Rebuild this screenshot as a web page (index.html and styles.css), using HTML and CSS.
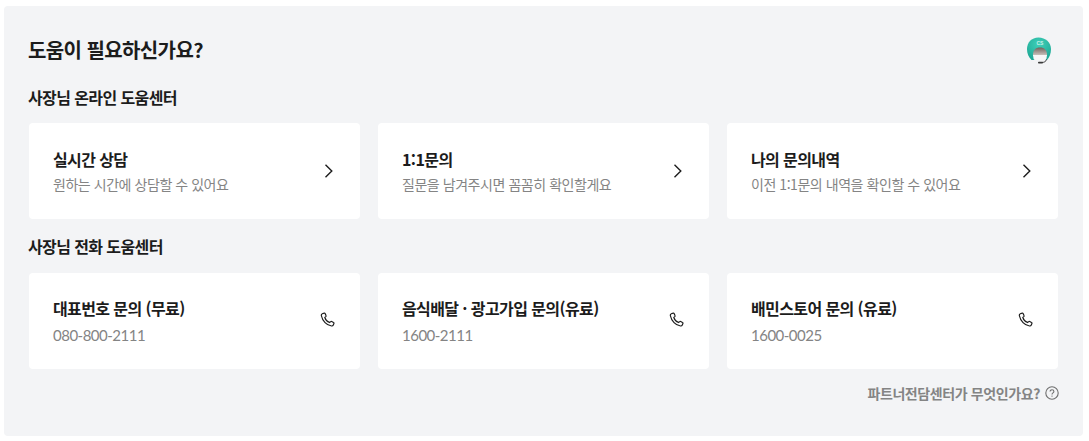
FILE: index.html
```html
<!DOCTYPE html>
<html lang="ko">
<head>
<meta charset="utf-8">
<title>도움이 필요하신가요?</title>
<link rel="stylesheet" href="styles.css">
</head>
<body>
<main class="panel">
  <header class="panel-head">
    <h1 class="title">도움이 필요하신가요?</h1>
    <svg class="cs-icon" viewBox="0 0 26 28" width="26" height="28" aria-hidden="true">
      <defs>
        <linearGradient id="inner" x1="0" y1="0" x2="0" y2="1"><stop offset="0" stop-color="#6f625c"/><stop offset="1" stop-color="#d2ccc6"/></linearGradient>
        <radialGradient id="shell" cx="0.5" cy="0.3" r="0.7"><stop offset="0" stop-color="#40d0b9"/><stop offset="1" stop-color="#1ea996"/></radialGradient>
      </defs>
      <path d="M12.500 0.500C5.500 0.500 1 5.500 1 12c0 4.500 1.700 8.500 4.500 11h15.500c2.500-2.500 4-6.500 4-11C25 5.500 19.500 0.500 12.500 0.500z" fill="url(#shell)"/>
      <path d="M7 18c0-5 2.500-7.500 7-7.500s7 2.500 7 7.500v1H7z" fill="url(#inner)"/>
      <path d="M7 18h14l-.5 3.500c-.3 1-1 1.500-2 1.500H9.500c-1 0-1.700-.5-2-1.500z" fill="#f7f7f7"/>
      <text class="cs-label" x="10.500" y="7.500">CS</text>
      <path d="M20.500 22.500c-.5 2-2.300 3-5 3" fill="none" stroke="#3a3a3a" stroke-width="1"/>
      <rect x="12" y="24.800" width="5" height="1.700" rx=".8" fill="#3a3a3a"/>
    </svg>
  </header>

  <h2 class="section-title">사장님 온라인 도움센터</h2>
  <section class="card-row">
    <a class="card">
      <div class="card-text">
        <strong class="card-title">실시간 상담</strong>
        <span class="card-sub">원하는 시간에 상담할 수 있어요</span>
      </div>
      <svg class="chevron" viewBox="0 0 16 16" width="16" height="16" aria-hidden="true"><path d="M4.500 1.800 10.800 8l-6.300 6.200" fill="none" stroke="#1c1c1c" stroke-width="1.400"/></svg>
    </a>
    <a class="card">
      <div class="card-text">
        <strong class="card-title">1:1문의</strong>
        <span class="card-sub">질문을 남겨주시면 꼼꼼히 확인할게요</span>
      </div>
      <svg class="chevron" viewBox="0 0 16 16" width="16" height="16" aria-hidden="true"><path d="M4.500 1.800 10.800 8l-6.300 6.200" fill="none" stroke="#1c1c1c" stroke-width="1.400"/></svg>
    </a>
    <a class="card">
      <div class="card-text">
        <strong class="card-title">나의 문의내역</strong>
        <span class="card-sub">이전 1:1문의 내역을 확인할 수 있어요</span>
      </div>
      <svg class="chevron" viewBox="0 0 16 16" width="16" height="16" aria-hidden="true"><path d="M4.500 1.800 10.800 8l-6.300 6.200" fill="none" stroke="#1c1c1c" stroke-width="1.400"/></svg>
    </a>
  </section>

  <h2 class="section-title section-title-phone">사장님 전화 도움센터</h2>
  <section class="card-row">
    <a class="card">
      <div class="card-text">
        <strong class="card-title">대표번호 문의 (무료)</strong>
        <span class="card-sub card-number">080-800-2111</span>
      </div>
      <svg class="phone" viewBox="0 0 16 16" width="16" height="16" aria-hidden="true"><path d="M2.300 1.700 4 1.100c.5-.2.900 0 1.100.4l.9 2c.2.400.1.800-.2 1.100l-1 .8c.6 2.200 2.500 4.300 4.800 5.100l1-.9c.3-.3.700-.3 1.100-.1l1.800 1c.4.200.6.700.4 1.100l-.6 1.400c-.3.700-1 1.100-1.800 1C6.700 13.400 2.500 9.200 1.300 3.500c-.1-.8.300-1.500 1-1.800z" fill="none" stroke="#1c1c1c" stroke-width="1.200"/></svg>
    </a>
    <a class="card">
      <div class="card-text">
        <strong class="card-title">음식배달 · 광고가입 문의(유료)</strong>
        <span class="card-sub card-number">1600-2111</span>
      </div>
      <svg class="phone" viewBox="0 0 16 16" width="16" height="16" aria-hidden="true"><path d="M2.300 1.700 4 1.100c.5-.2.900 0 1.100.4l.9 2c.2.400.1.800-.2 1.100l-1 .8c.6 2.200 2.500 4.300 4.800 5.100l1-.9c.3-.3.700-.3 1.100-.1l1.800 1c.4.200.6.700.4 1.100l-.6 1.400c-.3.700-1 1.100-1.800 1C6.700 13.400 2.500 9.200 1.300 3.500c-.1-.8.300-1.500 1-1.800z" fill="none" stroke="#1c1c1c" stroke-width="1.200"/></svg>
    </a>
    <a class="card">
      <div class="card-text">
        <strong class="card-title">배민스토어 문의 (유료)</strong>
        <span class="card-sub card-number">1600-0025</span>
      </div>
      <svg class="phone" viewBox="0 0 16 16" width="16" height="16" aria-hidden="true"><path d="M2.300 1.700 4 1.100c.5-.2.900 0 1.100.4l.9 2c.2.400.1.800-.2 1.100l-1 .8c.6 2.200 2.500 4.300 4.800 5.100l1-.9c.3-.3.700-.3 1.100-.1l1.800 1c.4.200.6.700.4 1.100l-.6 1.400c-.3.700-1 1.100-1.800 1C6.700 13.400 2.500 9.200 1.300 3.500c-.1-.8.300-1.500 1-1.800z" fill="none" stroke="#1c1c1c" stroke-width="1.200"/></svg>
    </a>
  </section>

  <footer class="panel-foot">
    <span class="foot-link">파트너전담센터가 무엇인가요?</span>
    <svg class="help" viewBox="0 0 14 14" width="14" height="14" aria-hidden="true">
      <circle cx="7" cy="7" r="6.200" fill="none" stroke="#6f6f6f" stroke-width="1.100"/>
      <path d="M5.100 5.500C5.100 4.400 6 3.800 7 3.800s1.900.7 1.900 1.700c0 1.400-1.900 1.400-1.900 2.900" fill="none" stroke="#6f6f6f" stroke-width="1.100"/>
      <circle cx="7" cy="10.100" r=".7" fill="#6f6f6f"/>
    </svg>
  </footer>
</main>
</body>
</html>
```
FILE: styles.css
```css
* { box-sizing: border-box; }

html, body { margin: 0; background: #fff; }

body {
  padding: 6px 6px 5px 4px;
  font-family: "Noto Sans CJK KR", "Noto Sans", sans-serif;
  color: #1c1c1c;
}

.panel {
  height: 430px;
  padding: 27px 25px 0;
  background: #f3f4f6;
  border-radius: 4px;
}

.panel-head {
  display: flex;
  align-items: center;
  justify-content: space-between;
  height: 34px;
}

.title {
  margin: 0 0 0 -1px;
  font-size: 20px;
  line-height: 34px;
  font-weight: 700;
  letter-spacing: -0.6px;
}

.cs-icon { margin-right: 6px; margin-top: 1px; }

.cs-label {
  font-family: "Liberation Sans", sans-serif;
  font-size: 5px;
  font-weight: 700;
  fill: #c9f0e9;
}

.section-title {
  margin: 19px 0 15px -1px;
  font-size: 16px;
  line-height: 22px;
  font-weight: 700;
  letter-spacing: -0.6px;
}

.section-title-phone { margin-top: 16px; margin-bottom: 16px; }

.card-row {
  display: grid;
  grid-template-columns: repeat(3, 331px);
  gap: 18px;
}

.card {
  display: flex;
  align-items: center;
  justify-content: space-between;
  height: 96px;
  padding: 0 23px 0 24px;
  background: #fff;
  border-radius: 4px;
}

.card-text {
  display: flex;
  flex-direction: column;
  gap: 4px;
  margin-bottom: 1px;
}

.card-title {
  font-size: 16px;
  line-height: 22px;
  font-weight: 700;
  letter-spacing: -0.6px;
}

.card-sub {
  font-size: 14px;
  line-height: 20px;
  color: #848484;
  letter-spacing: -0.45px;
}

.card-number {
  font-family: "Lato", "Noto Sans CJK KR", sans-serif;
  font-size: 15px;
  letter-spacing: -0.5px;
  padding-top: 2px;
}

.phone { margin: 0 1px 2px 0; }

.panel-foot {
  display: flex;
  align-items: center;
  justify-content: flex-end;
  gap: 5px;
  margin: 14px -1px 0 0;
}

.foot-link {
  font-size: 14px;
  line-height: 20px;
  font-weight: 700;
  color: #848484;
  letter-spacing: -0.4px;
}
```
